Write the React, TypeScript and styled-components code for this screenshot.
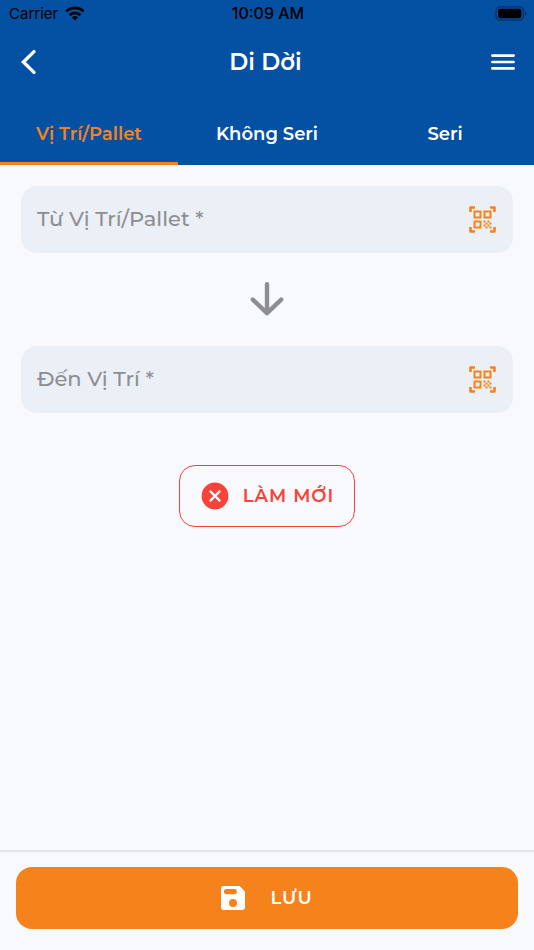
import React from "react";
import styled, { createGlobalStyle } from "styled-components";

const colors = {
  blue: "#0450a2",
  orange: "#f5821b",
  red: "#f9423a",
  page: "#f7f9fd",
  field: "#ebf0f6",
  grey: "#8e8e92",
};

const GlobalStyle = createGlobalStyle`
  *, *::before, *::after { box-sizing: border-box; }
  body {
    margin: 0;
    background: ${colors.page};
    font-family: Montserrat, Inter, "Noto Sans", sans-serif;
  }
  button, input { font: inherit; }
  button { cursor: pointer; }
  svg { display: block; flex: none; }
`;

const Screen = styled.div`
  min-height: 100vh;
  display: flex;
  flex-direction: column;
`;

const Header = styled.header`
  background: ${colors.blue};
`;

const StatusBar = styled.div`
  height: 28px;
  display: grid;
  grid-template-columns: 1fr auto 1fr;
  align-items: center;
  padding: 0 7px 2px 9px;
  color: #000;
  font-family: Inter, sans-serif;
  font-size: 15px;
`;

const Carrier = styled.div`
  display: flex;
  align-items: center;
  gap: 7px;
`;

const Clock = styled.time`
  font-size: 16px;
  font-weight: 500;
`;

const BatterySlot = styled.div`
  justify-self: end;
`;

const NavBar = styled.div`
  height: 68px;
  display: grid;
  grid-template-columns: 48px 1fr 48px;
  align-items: center;
  padding: 0 7px 0 4px;
`;

const Title = styled.h1`
  margin: 0;
  color: #fff;
  font-size: 23px;
  font-weight: 600;
  text-align: center;
`;

const IconButton = styled.button`
  display: flex;
  align-items: center;
  justify-content: center;
  padding: 0;
  border: 0;
  background: none;
  color: inherit;
`;

const NavButton = styled(IconButton)`
  height: 48px;
  color: #fff;
`;

const Tabs = styled.div`
  height: 69px;
  display: grid;
  grid-template-columns: repeat(3, 1fr);
`;

const Tab = styled.button<{ $active?: boolean }>`
  padding: 9px 0 0;
  border: 0;
  border-bottom: 3px solid ${(p) => (p.$active ? colors.orange : "transparent")};
  background: none;
  color: ${(p) => (p.$active ? colors.orange : "#fff")};
  font-size: 18px;
  font-weight: 600;
`;

const Main = styled.main`
  flex: 1;
  display: flex;
  flex-direction: column;
  align-items: center;
  padding: 21px;
`;

const Field = styled.div`
  width: 100%;
  height: 67px;
  display: flex;
  align-items: center;
  padding: 0 17px 0 16px;
  border-radius: 16px;
  background: ${colors.field};
  color: ${colors.orange};
`;

const FieldInput = styled.input`
  flex: 1;
  min-width: 0;
  height: 100%;
  padding: 0 0 2px;
  border: 0;
  outline: 0;
  background: none;
  color: #333;
  font-size: 21px;
  font-weight: 500;

  &::placeholder {
    color: ${colors.grey};
    opacity: 1;
  }
`;

const ArrowSlot = styled.div`
  height: 93px;
  display: flex;
  align-items: center;
  padding-bottom: 2px;
  color: ${colors.grey};
`;

const ResetButton = styled.button`
  height: 62px;
  display: flex;
  align-items: center;
  gap: 14px;
  margin-top: 52px;
  padding: 0 20px 0 21px;
  border: 1px solid ${colors.red};
  border-radius: 16px;
  background: none;
  color: ${colors.red};
  font-size: 18px;
  font-weight: 600;
  letter-spacing: 1px;
`;

const Footer = styled.footer`
  padding: 15px 16px 21px;
  border-top: 2px solid #e1e3e8;
`;

const SaveButton = styled.button`
  width: 100%;
  height: 62px;
  display: flex;
  align-items: center;
  justify-content: center;
  gap: 25px;
  border: 0;
  border-radius: 16px;
  background: ${colors.orange};
  color: #fff;
  font-size: 18px;
  font-weight: 600;
  letter-spacing: 1px;
`;

const WifiIcon = () => (
  <svg width="20" height="15" viewBox="0 0 20 15" fill="none" stroke="currentColor" strokeWidth="2.7" aria-hidden="true">
    <path d="M1.3 5.4a12.4 12.4 0 0 1 17.4 0" />
    <path d="M4.6 9a7.8 7.8 0 0 1 10.8 0" />
    <path d="M10 14.4 7 11.4a4.3 4.3 0 0 1 6 0z" fill="currentColor" stroke="none" />
  </svg>
);

const BatteryIcon = () => (
  <svg width="32" height="15" viewBox="0 0 32 15" aria-hidden="true">
    <rect x="1" y=".8" width="27.4" height="13.4" rx="4" fill="none" stroke="#000" strokeOpacity=".4" strokeWidth="1.2" />
    <rect x="3" y="2.8" width="23.4" height="9.4" rx="2.2" />
    <path d="M30 5.2c2 .8 2 3.8 0 4.6z" fillOpacity=".45" />
  </svg>
);

const BackIcon = () => (
  <svg width="24" height="28" viewBox="0 0 24 28" fill="none" stroke="currentColor" strokeWidth="3.4" strokeLinecap="round" aria-hidden="true">
    <path d="M18 3.6 7.4 14 18 24.4" />
  </svg>
);

const MenuIcon = () => (
  <svg width="24" height="24" viewBox="0 0 24 24" fill="none" stroke="currentColor" strokeWidth="2.7" strokeLinecap="round" aria-hidden="true">
    <path d="M1.4 5.6h21.2M1.4 12h21.2M1.4 18.4h21.2" />
  </svg>
);

const ArrowDownIcon = () => (
  <svg width="36" height="36" viewBox="0 0 36 36" fill="none" stroke="currentColor" strokeWidth="4.4" strokeLinecap="round" strokeLinejoin="round" aria-hidden="true">
    <path d="M18 3.2v29M3.8 18.6 18 32.2l14.2-13.6" />
  </svg>
);

const CancelIcon = () => (
  <svg width="28" height="28" viewBox="0 0 28 28" aria-hidden="true">
    <circle cx="14" cy="14" r="13.4" fill="currentColor" />
    <path d="m9.4 9.4 9.2 9.2m0-9.2-9.2 9.2" stroke="#fff" strokeWidth="2.2" strokeLinecap="round" />
  </svg>
);

const QrScanIcon = () => (
  <svg width="27" height="27" viewBox="0 0 27 27" fill="none" stroke="currentColor" aria-hidden="true">
    <path d="M1.5 6V1.5H6M21 1.5h4.5V6M25.5 21v4.5H21M6 25.5H1.5V21" strokeWidth="2.6" strokeLinejoin="round" />
    <path d="M5.5 5.5h6v6h-6zM15.5 5.5h6v6h-6zM5.5 15.5h6v6h-6z" strokeWidth="2" />
    <path
      d="M14.5 14.5h2v2h-2zM18.5 14.5h2v2h-2zM16.5 16.5h2v2h-2zM20.5 16.5h2v2h-2zM14.5 18.5h2v2h-2zM18.5 18.5h2v2h-2zM16.5 20.5h2v2h-2zM20.5 20.5h2v2h-2z"
      fill="currentColor"
      stroke="none"
    />
  </svg>
);

const SaveIcon = () => (
  <svg width="24" height="24" viewBox="0 0 24 24" fill="currentColor" aria-hidden="true">
    <path
      fillRule="evenodd"
      d="M2.4 0h16.2L24 5.4v16.2a2.4 2.4 0 0 1-2.4 2.4H2.4A2.4 2.4 0 0 1 0 21.600V2.400A2.400 2.400 0 0 1 2.400 0ZM5.500 3a2.600 2.600 0 0 0 0 5.200h7.800a2.600 2.600 0 0 0 0-5.200ZM12 13a4 4 0 1 0 0 8 4 4 0 0 0 0-8Z"
    />
  </svg>
);

const ScanField = ({ label }: { label: string }) => (
  <Field>
    <FieldInput type="text" aria-label={label} placeholder={label} />
    <IconButton type="button" aria-label="Quét mã QR">
      <QrScanIcon />
    </IconButton>
  </Field>
);

const tabs = ["Vị Trí/Pallet", "Không Seri", "Seri"];

export default function App() {
  const [active, setActive] = React.useState(0);

  return (
    <>
      <GlobalStyle />
      <Screen>
        <Header>
          <StatusBar>
            <Carrier>
              Carrier
              <WifiIcon />
            </Carrier>
            <Clock>10:09 AM</Clock>
            <BatterySlot>
              <BatteryIcon />
            </BatterySlot>
          </StatusBar>
          <NavBar>
            <NavButton type="button" aria-label="Quay lại">
              <BackIcon />
            </NavButton>
            <Title>Di Dời</Title>
            <NavButton type="button" aria-label="Menu">
              <MenuIcon />
            </NavButton>
          </NavBar>
          <Tabs role="tablist">
            {tabs.map((name, i) => (
              <Tab key={name} type="button" role="tab" aria-selected={i === active} $active={i === active} onClick={() => setActive(i)}>
                {name}
              </Tab>
            ))}
          </Tabs>
        </Header>
        <Main>
          <ScanField label="Từ Vị Trí/Pallet *" />
          <ArrowSlot>
            <ArrowDownIcon />
          </ArrowSlot>
          <ScanField label="Đến Vị Trí *" />
          <ResetButton type="button">
            <CancelIcon />
            LÀM MỚI
          </ResetButton>
        </Main>
        <Footer>
          <SaveButton type="button">
            <SaveIcon />
            LƯU
          </SaveButton>
        </Footer>
      </Screen>
    </>
  );
}
